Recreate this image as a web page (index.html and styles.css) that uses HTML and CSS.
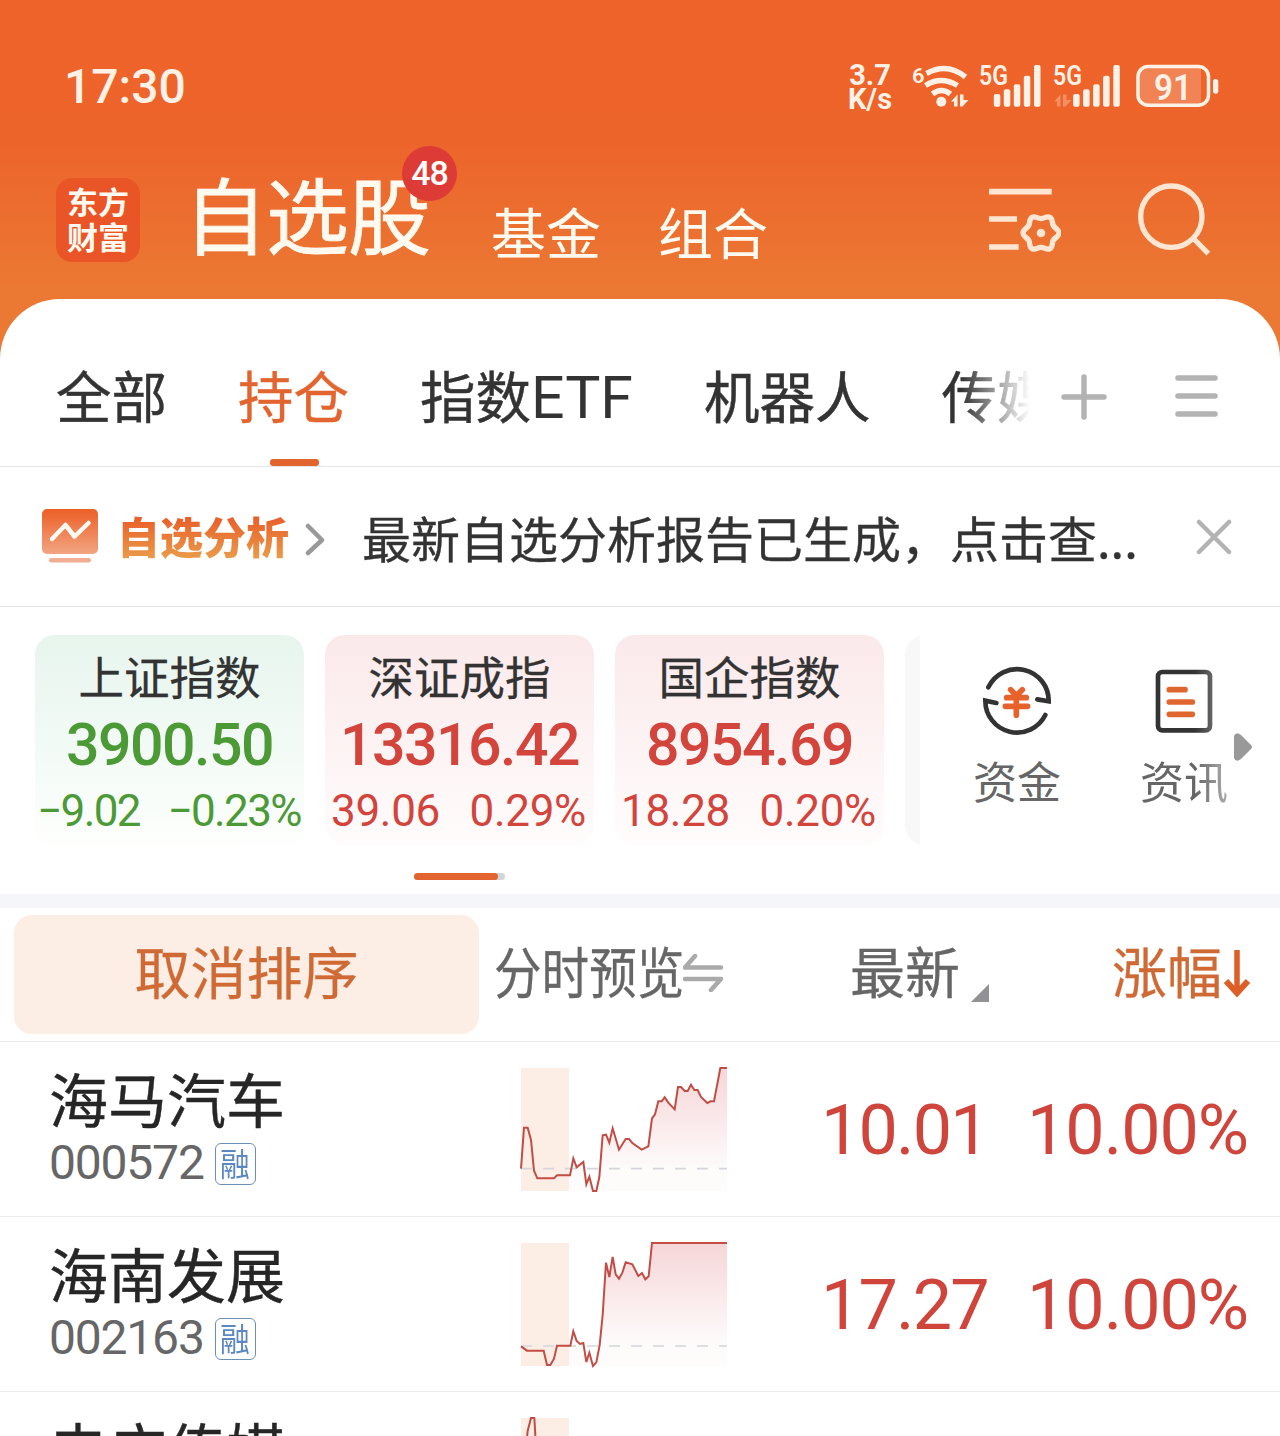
FILE: index.html
```html
<!DOCTYPE html>
<html lang="zh-CN">
<head>
    <meta charset="UTF-8">
    <meta name="viewport" content="width=device-width, initial-scale=1.0">
    <title>自选股</title>
    <link rel="stylesheet" href="styles.css">
</head>
<body>
    <div class="status-bar">
        <span class="time">17:30</span>
        <div class="net-speed"><span>3.7</span><span>K/s</span></div>
        <svg class="status-icons" width="310" height="52" viewBox="912 60 310 52">
            <!-- wifi -->
            <text x="912" y="82.5" font-size="21" textLength="12.5" lengthAdjust="spacingAndGlyphs">6</text>
            <g fill="none" stroke="#fff1e6" stroke-width="5.5">
                <path d="M926.5 73.5Q947 62 965.5 77"/>
                <path d="M925.5 85.5Q941 75.5 957.5 85.5"/>
                <path d="M932.5 94Q941.5 87 950.5 94"/>
            </g>
            <circle cx="941.3" cy="101.7" r="5"/>
            <path d="M951 101.5L957.5 94.5V106.5H954V101.5ZM960 94.500H963.5V100H968.5L962.5 106.5H960Z"/>
            <!-- signal 1 -->
            <text x="979" y="85" font-size="27" textLength="29" lengthAdjust="spacingAndGlyphs">5G</text>
            <rect x="993.8" y="94" width="6.5" height="12.7" rx="2"/>
            <rect x="1003.8" y="89.3" width="6.5" height="17.4" rx="2"/>
            <rect x="1013.8" y="84.3" width="6.5" height="22.4" rx="2"/>
            <rect x="1023.8" y="75.7" width="6.5" height="31" rx="2"/>
            <rect x="1034" y="65" width="6.5" height="41.7" rx="2"/>
            <!-- signal 2 -->
            <text x="1053" y="85" font-size="27" textLength="29" lengthAdjust="spacingAndGlyphs">5G</text>
            <path d="M1054 101.5L1060.5 94.5V106.5H1057V101.5ZM1063 94.5H1066.5V100H1071.5L1065.5 106.5H1063Z" opacity=".3"/>
            <rect x="1073.1" y="94" width="6.5" height="12.7" rx="2"/>
            <rect x="1083.1" y="89.3" width="6.5" height="17.4" rx="2"/>
            <rect x="1093.1" y="84.3" width="6.5" height="22.4" rx="2"/>
            <rect x="1103.1" y="75.7" width="6.5" height="31" rx="2"/>
            <rect x="1113.3" y="65" width="6.5" height="41.7" rx="2"/>
            <!-- battery -->
            <path d="M1201 67V104.5H1148Q1140 104.5 1140 96V75Q1140 67 1148 67Z" opacity=".22"/>
            <rect x="1138" y="66.5" width="70.5" height="38.7" rx="10" fill="none" stroke="#fff1e6" stroke-width="3.5"/>
            <rect x="1213" y="79" width="5.3" height="14.7" rx="2.6"/>
            <text x="1154" y="100" font-size="37" textLength="38" lengthAdjust="spacingAndGlyphs">91</text>
        </svg>
    </div>

    <header class="header">
        <div class="logo"><span>东方</span><span>财富</span></div>
        <h1 class="title">自选股<span class="badge">48</span></h1>
        <a class="nav-link">基金</a>
        <a class="nav-link">组合</a>
        <svg class="filter-icon" width="72" height="65" viewBox="87 85 216 195" fill="none" stroke="#ffe6d2">
            <path d="M87 96H275M87 178H171M87 262H176" stroke-width="17"/>
            <g transform="translate(243 220)">
                <path d="M46.4-12.4Q61.6 0 46.4 12.4Q34.3 19.8 33.9 33.9Q30.8 53.3 12.4 46.4Q0 39.6-12.4 46.4Q-30.8 53.3-33.9 33.9Q-34.3 19.8-46.4 12.4Q-61.6 0-46.4-12.4Q-34.3-19.8-33.9-33.9Q-30.8-53.3-12.4-46.4Q0-39.6 12.4-46.4Q30.8-53.3 33.9-33.9Q34.3-19.8 46.4-12.4Z" stroke-width="16"/>
                <circle r="13" fill="#ffe6d2" stroke="none"/>
            </g>
        </svg>
        <svg class="search-icon" width="73" height="74" viewBox="533 67 219 222" fill="none" stroke="#ffe6d2" stroke-width="16">
            <circle cx="633" cy="168" r="92"/>
            <path d="M698 232L744 279"/>
        </svg>
    </header>

    <main class="panel">
        <nav class="tabs">
            <div class="tab-list">
                <span class="tab">全部</span>
                <span class="tab active">持仓</span>
                <span class="tab">指数<span class="latin">ETF</span></span>
                <span class="tab">机器人</span>
                <span class="tab">传媒</span>
            </div>
            <svg class="plus-icon" width="46" height="46" viewBox="0 0 46 46" stroke="#b3b3b3" stroke-width="5.5" stroke-linecap="round">
                <path d="M3 23H43M23 3V43"/>
            </svg>
            <svg class="menu-icon" width="43" height="44" viewBox="0 0 43 44" stroke="#b3b3b3" stroke-width="5.5" stroke-linecap="round">
                <path d="M3 4H40M3 22H40M3 40H40"/>
            </svg>
        </nav>

        <section class="notice">
            <svg width="58" height="56" viewBox="0 0 58 56">
                <defs>
                    <linearGradient id="screen" x1="0" y1="0" x2="0" y2="1">
                        <stop offset="0" stop-color="#ec5f26"/>
                        <stop offset="1" stop-color="#f2a582"/>
                    </linearGradient>
                </defs>
                <rect x="1" y="0" width="56" height="45" rx="5" fill="url(#screen)"/>
                <path d="M11 30L24.5 16L33.5 27.5L47.5 14" fill="none" stroke="#fffaf2" stroke-width="4.5" stroke-linecap="round" stroke-linejoin="round"/>
                <rect x="8" y="49" width="42" height="4.5" rx="2.2" fill="#f2ae91"/>
            </svg>
            <span class="notice-title">自选分析</span>
            <svg class="chevron" width="20" height="34" viewBox="0 0 20 34" fill="none" stroke="#999" stroke-width="4.5" stroke-linecap="round" stroke-linejoin="round">
                <path d="M3 4L17 18L3 31"/>
            </svg>
            <span class="notice-text">最新自选分析报告已生成，点击查...</span>
            <svg class="close-icon" width="36" height="36" viewBox="0 0 36 36" stroke="#b3b3b3" stroke-width="4.5" stroke-linecap="round">
                <path d="M3 3L33 33M33 3L3 33"/>
            </svg>
        </section>

        <section class="market">
            <div class="cards">
                <div class="card down">
                    <div class="card-name">上证指数</div>
                    <div class="card-price">3900.50</div>
                    <div class="card-change"><span>−9.02</span><span>−0.23%</span></div>
                </div>
                <div class="card up">
                    <div class="card-name">深证成指</div>
                    <div class="card-price">13316.42</div>
                    <div class="card-change"><span>39.06</span><span>0.29%</span></div>
                </div>
                <div class="card up">
                    <div class="card-name">国企指数</div>
                    <div class="card-price">8954.69</div>
                    <div class="card-change"><span>18.28</span><span>0.20%</span></div>
                </div>
                <div class="card more"></div>
            </div>
            <div class="shortcuts">
                <div class="shortcut">
                    <svg width="70" height="70" viewBox="275 139 210 210" fill="none" stroke-linecap="round">
                        <g stroke="#333" stroke-width="14">
                            <path d="M294 203A95 95 0 0 1 475 245L441 239"/>
                            <path d="M465 286A95 95 0 0 1 285 243L318 250"/>
                        </g>
                        <path d="M361 210L378 228L396 210M349 234H408M345 260H412M378 228V287" stroke="#e8622c" stroke-width="17"/>
                    </svg>
                    <span>资金</span>
                </div>
                <div class="shortcut fade">
                    <svg width="70" height="70" viewBox="772 139 210 210" fill="none" stroke-linecap="round">
                        <rect x="799" y="157" width="156" height="175" rx="13" stroke="#333" stroke-width="14"/>
                        <path d="M833 210H880M833 247H902M833 284H902" stroke="#e0662f" stroke-width="17"/>
                    </svg>
                    <span>资讯</span>
                </div>
                <svg class="next-arrow" width="18" height="28" viewBox="0 0 18 28">
                    <path d="M0 3Q2-2 7 2L17 12Q19 14 17 16L7 26Q2 30 0 25Z" fill="#999"/>
                </svg>
            </div>
            <div class="pager"><span></span></div>
        </section>

        <section class="stocks">
            <div class="row-head">
                <div class="cancel-sort">取消排序</div>
                <div class="col-preview"><span>分时预览</span></div>
                <svg class="swap-icon" width="42" height="38" viewBox="0 0 42 38" fill="none" stroke="#aaa" stroke-width="4.5" stroke-linecap="round" stroke-linejoin="round">
                    <path d="M12 2L2 13.500H38M2 25H38L28 36"/>
                </svg>
                <div class="col-latest">最新</div>
                <svg class="corner" width="18" height="18" viewBox="0 0 18 18"><path d="M18 0V18H0Z" fill="#919196"/></svg>
                <div class="col-change">涨幅</div>
                <svg class="sort-arrow" width="28" height="50" viewBox="0 0 28 50" fill="none" stroke="#dc5f27" stroke-width="5.5">
                    <path d="M14 1V42"/><path d="M3 32L14 44L25 32" stroke-width="6"/>
                </svg>
            </div>

            <div class="row">
                <div class="stock">
                    <div class="stock-name">海马汽车</div>
                    <div class="stock-code">000572<span class="tag"><b>融</b></span></div>
                </div>
                <svg class="chart" width="206" height="123" viewBox="63 54 618 369">
                    <defs>
                        <linearGradient id="area" gradientUnits="userSpaceOnUse" x1="0" y1="54" x2="0" y2="423">
                            <stop offset="0" stop-color="#f6d6d8"/>
                            <stop offset=".82" stop-color="#fefbfb"/>
                            <stop offset="1" stop-color="#fdfcfb"/>
                        </linearGradient>
                    </defs>
                    <path class="area" d="M207 423V376H210L220 325L230 352L250 336L259 403L268 380L279 423H289L298 381L308 256L318 254L328 278L338 235L357 299L377 267H387L397 279L425 299L445 289L456 205L465 193L475 154H485L494 142L505 158L524 178L534 111H543L554 123H563L573 104L583 120H593L603 141L622 159L632 154H642L661 54H681V423Z"/>
                    <rect class="auction" x="63" y="54" width="144" height="369"/>
                    <path class="base" d="M63 356H681"/>
                    <path class="line" d="M63 356L72 233H83L93 270L102 362L112 385H162L171 376H210L220 325L230 352L250 336L259 403L268 380L279 423H289L298 381L308 256L318 254L328 278L338 235L357 299L377 267H387L397 279L425 299L445 289L456 205L465 193L475 154H485L494 142L505 158L524 178L534 111H543L554 123H563L573 104L583 120H593L603 141L622 159L632 154H642L661 54H681"/>
                </svg>
                <div class="price">10.01</div>
                <div class="percent">10.00%</div>
            </div>

            <div class="row">
                <div class="stock">
                    <div class="stock-name">海南发展</div>
                    <div class="stock-code">002163<span class="tag"><b>融</b></span></div>
                </div>
                <svg class="chart" width="206" height="123" viewBox="63 54 618 369">
                    <path class="area" d="M207 423V362H211L220 319L230 348L240 357L250 354L259 411L268 383L279 423L289 412L299 360L308 270L318 113L328 156L338 96L347 148L357 161L367 143L377 112L397 118L415 153L426 144L436 163L446 154L456 54H681V423Z"/>
                    <rect class="auction" x="63" y="54" width="144" height="369"/>
                    <path class="base" d="M63 363H681"/>
                    <path class="line" d="M63 364L81 377H131L141 420H151L162 401L171 362H211L220 319L230 348L240 357L250 354L259 411L268 383L279 423L289 412L299 360L308 270L318 113L328 156L338 96L347 148L357 161L367 143L377 112L397 118L415 153L426 144L436 163L446 154L456 54H681"/>
                </svg>
                <div class="price">17.27</div>
                <div class="percent">10.00%</div>
            </div>

            <div class="row">
                <div class="stock">
                    <div class="stock-name">电广传媒</div>
                </div>
                <svg class="chart" width="206" height="123" viewBox="63 54 618 369">
                    <rect class="auction" x="63" y="54" width="144" height="369"/>
                    <path class="line" d="M78 140L83 93L93 54H103L108 140"/>
                </svg>
            </div>
        </section>
    </main>
</body>
</html>
```
FILE: styles.css
```css
* {
    box-sizing: border-box;
}
body {
    margin: 0;
    width: 1280px;
    height: 1436px;
    overflow: hidden;
    font-family: "Noto Sans CJK SC", sans-serif;
    background: #ee642a linear-gradient(180deg, #ee632a 0, #ed642b 140px, #eb7833 290px, #ea7a36 360px);
}
svg {
    display: block;
    flex-shrink: 0;
}

/* status bar */
.status-bar {
    display: flex;
    height: 140px;
    padding: 60px 58px 0 64px;
    color: #fff1e6;
    font-family: Roboto, sans-serif;
}
.time {
    font-size: 48px;
    font-weight: 500;
    line-height: 54px;
}
.net-speed {
    display: flex;
    flex-direction: column;
    align-items: center;
    width: 50px;
    margin-left: auto;
    margin-right: 17px;
    padding-top: 3px;
    font-size: 29px;
    font-weight: 700;
    line-height: 24px;
}
.status-icons {
    fill: #fff1e6;
    font-weight: 600;
}

/* header */
.header {
    display: flex;
    align-items: flex-start;
    height: 159px;
    padding-left: 56px;
    color: #fffaf0;
}
.logo {
    display: flex;
    flex-direction: column;
    align-items: center;
    width: 84px;
    height: 84px;
    margin-top: 38px;
    padding-top: 5px;
    border-radius: 16px;
    background: #ea5528;
    font-size: 31px;
    font-weight: 700;
    line-height: 35px;
}
.title {
    position: relative;
    width: 247px;
    margin: 22px 0 0 44px;
    font-size: 83px;
    font-weight: 400;
    line-height: 100px;
    letter-spacing: -1px;
    white-space: nowrap;
    -webkit-text-stroke: 0.8px;
}
.badge {
    position: absolute;
    top: -16px;
    left: 218px;
    width: 55px;
    height: 55px;
    border-radius: 50%;
    background: #dd3b35;
    color: #fff;
    font: 500 34px/55px Roboto, sans-serif;
    letter-spacing: -1px;
    text-align: center;
    -webkit-text-stroke: 0;
}
.nav-link {
    width: 110px;
    margin: 60px 0 0 57px;
    font-size: 55px;
    line-height: 60px;
}
.title + .nav-link {
    margin-left: 60px;
}
.filter-icon {
    margin: 48px 0 0 221px;
}
.search-icon {
    margin: 43px 0 0 77px;
}

/* white panel */
.panel {
    height: 1137px;
    overflow: hidden;
    border-radius: 60px 60px 0 0;
    background: #fff;
}
.tabs {
    display: flex;
    height: 168px;
    padding-left: 56px;
    border-bottom: 1px solid #e6e6e6;
}
.tab-list {
    display: flex;
    gap: 71px;
    width: 974px;
    overflow: hidden;
    white-space: nowrap;
    -webkit-mask-image: linear-gradient(90deg, #000 905px, transparent 974px);
    mask-image: linear-gradient(90deg, #000 905px, transparent 974px);
}
.tab {
    position: relative;
    height: 167px;
    padding-top: 55px;
    color: #333;
    font-size: 55.5px;
    line-height: 80px;
    -webkit-text-stroke: 0.4px;
}
.tab.active {
    color: #e2652f;
}
.tab.active::after {
    content: "";
    position: absolute;
    left: 32px;
    bottom: 0;
    width: 49px;
    height: 7px;
    border-radius: 3px;
    background: #e2652f;
}
.latin {
    font-family: Roboto, sans-serif;
    font-size: 59px;
    line-height: 1;
    -webkit-text-stroke: 0;
}
.plus-icon {
    margin: 75px 0 0 31px;
}
.menu-icon {
    margin: 75px 0 0 68px;
}

/* analysis notice */
.notice {
    display: flex;
    align-items: center;
    height: 140px;
    padding-left: 41px;
    border-bottom: 1px solid #e6e6e6;
}
.notice-title {
    width: 172px;
    margin: -4px 0 0 18px;
    font-size: 43px;
    font-weight: 900;
    line-height: 56px;
    color: transparent;
    background: linear-gradient(180deg, #e8602a 20%, #ea9a48 90%);
    -webkit-background-clip: text;
    background-clip: text;
}
.chevron {
    margin: 5px 0 0 16px;
}
.notice-text {
    width: 790px;
    margin-left: 37px;
    color: #333;
    font-size: 49px;
    white-space: nowrap;
    -webkit-text-stroke: 0.3px;
}
.close-icon {
    margin-left: 44px;
}

/* index cards */
.market {
    display: grid;
    grid-template-columns: 920px 360px;
    grid-template-rows: 238px 49px;
    height: 301px;
    border-bottom: 14px solid #f5f6fa;
}
.cards {
    display: flex;
    gap: 21px;
    padding: 28px 0 0 35px;
    overflow: hidden;
}
.card {
    flex: none;
    width: 269px;
    height: 210px;
    border-radius: 20px;
    text-align: center;
}
.card.down {
    background: linear-gradient(180deg, #e7f5ed, #fdfffd);
    color: #4c9a36;
}
.card.up {
    background: linear-gradient(180deg, #fbe9ea, #fffcfc);
    color: #d2443c;
}
.card.more {
    background: #f7f8fa;
}
.card-name {
    padding-top: 10px;
    color: #333;
    font-size: 45.5px;
    line-height: 60px;
    -webkit-text-stroke: 0.3px;
}
.card-price {
    font-family: Roboto, sans-serif;
    font-size: 59px;
    font-weight: 500;
    line-height: 80px;
    letter-spacing: -1.5px;
}
.card-change {
    display: flex;
    justify-content: space-between;
    padding: 0 8px 0 6px;
    font-family: Roboto, sans-serif;
    font-size: 44px;
    line-height: 52px;
    letter-spacing: -0.3px;
}
.card.down .card-change {
    padding: 0 3px 0 2px;
    letter-spacing: -1.6px;
}
.shortcuts {
    position: relative;
    display: flex;
    gap: 79px;
    padding: 59px 0 0 53px;
}
.shortcut {
    display: flex;
    flex-direction: column;
    align-items: center;
    width: 88px;
    color: #666;
    font-size: 44px;
    line-height: 60px;
}
.shortcut span {
    margin-top: 14px;
}
.shortcut.fade {
    -webkit-mask-image: linear-gradient(90deg, #000 55px, rgba(0, 0, 0, 0.5) 90px);
    mask-image: linear-gradient(90deg, #000 55px, rgba(0, 0, 0, 0.5) 90px);
}
.next-arrow {
    position: absolute;
    top: 126px;
    left: 314px;
}
.pager {
    width: 91px;
    height: 7px;
    margin: 28px 0 0 414px;
    border-radius: 4px;
    background: #d3d5da;
}
.pager span {
    display: block;
    width: 84px;
    height: 7px;
    border-radius: 4px;
    background: #e2652f;
}

/* stock list */
.row-head {
    display: flex;
    height: 134px;
    padding: 7px 0 0 14px;
    border-bottom: 1px solid #ececec;
    color: #666;
    font-size: 55px;
    line-height: 109px;
    white-space: nowrap;
    -webkit-text-stroke: 0.3px;
}
.cancel-sort {
    width: 465px;
    height: 119px;
    border-radius: 18px;
    background: #fcede5;
    color: #cf6a35;
    font-size: 56px;
    text-align: center;
}
.col-preview {
    width: 189px;
    margin-left: 15px;
}
.col-preview span {
    display: inline-block;
    transform: scaleX(0.865);
    transform-origin: 0 0;
}
.swap-icon {
    margin-top: 39px;
}
.col-latest {
    margin-left: 125px;
}
.corner {
    margin: 69px 0 0 11px;
}
.col-change {
    margin-left: 123px;
    color: #cf6a35;
}
.sort-arrow {
    margin: 34px 0 0 1px;
}
.row {
    display: flex;
    height: 175px;
    padding-left: 49px;
    border-bottom: 1px solid #ececec;
}
.row:last-child {
    height: 44px;
    overflow: hidden;
    border-bottom: 0;
}
.stock {
    width: 472px;
    padding-top: 21px;
}
.stock-name {
    color: #262626;
    font-size: 59px;
    line-height: 70px;
    -webkit-text-stroke: 0.4px;
}
.stock-code {
    display: flex;
    align-items: center;
    color: #666;
    font-family: Roboto, sans-serif;
    font-size: 48px;
    line-height: 60px;
    letter-spacing: -1.2px;
}
.tag {
    display: flex;
    align-items: center;
    justify-content: center;
    width: 41px;
    height: 42px;
    margin: 2px 0 0 11px;
    border: 1px solid #6a90b8;
    border-radius: 6px;
    color: #5b87c2;
    font: 32px/32px "Noto Sans CJK SC", sans-serif;
    letter-spacing: 0;
}
.tag b {
    margin-top: -5px;
    font-weight: 400;
    transform: scaleX(0.93);
}
.chart {
    margin-top: 26px;
    overflow: visible;
}
.chart .area {
    fill: url(#area);
}
.chart .auction {
    fill: #fcede5;
}
.chart .base {
    fill: none;
    stroke: #d4d6db;
    stroke-width: 5;
    stroke-dasharray: 33 33;
}
.chart .line {
    fill: none;
    stroke: #c24d45;
    stroke-width: 6;
}
.price,
.percent {
    color: #cf453c;
    font-family: Roboto, sans-serif;
    font-size: 70px;
    line-height: 176px;
    letter-spacing: -1.8px;
}
.price {
    width: 206px;
    margin-left: 94px;
}
.percent {
    letter-spacing: -1px;
    white-space: nowrap;
}
```
